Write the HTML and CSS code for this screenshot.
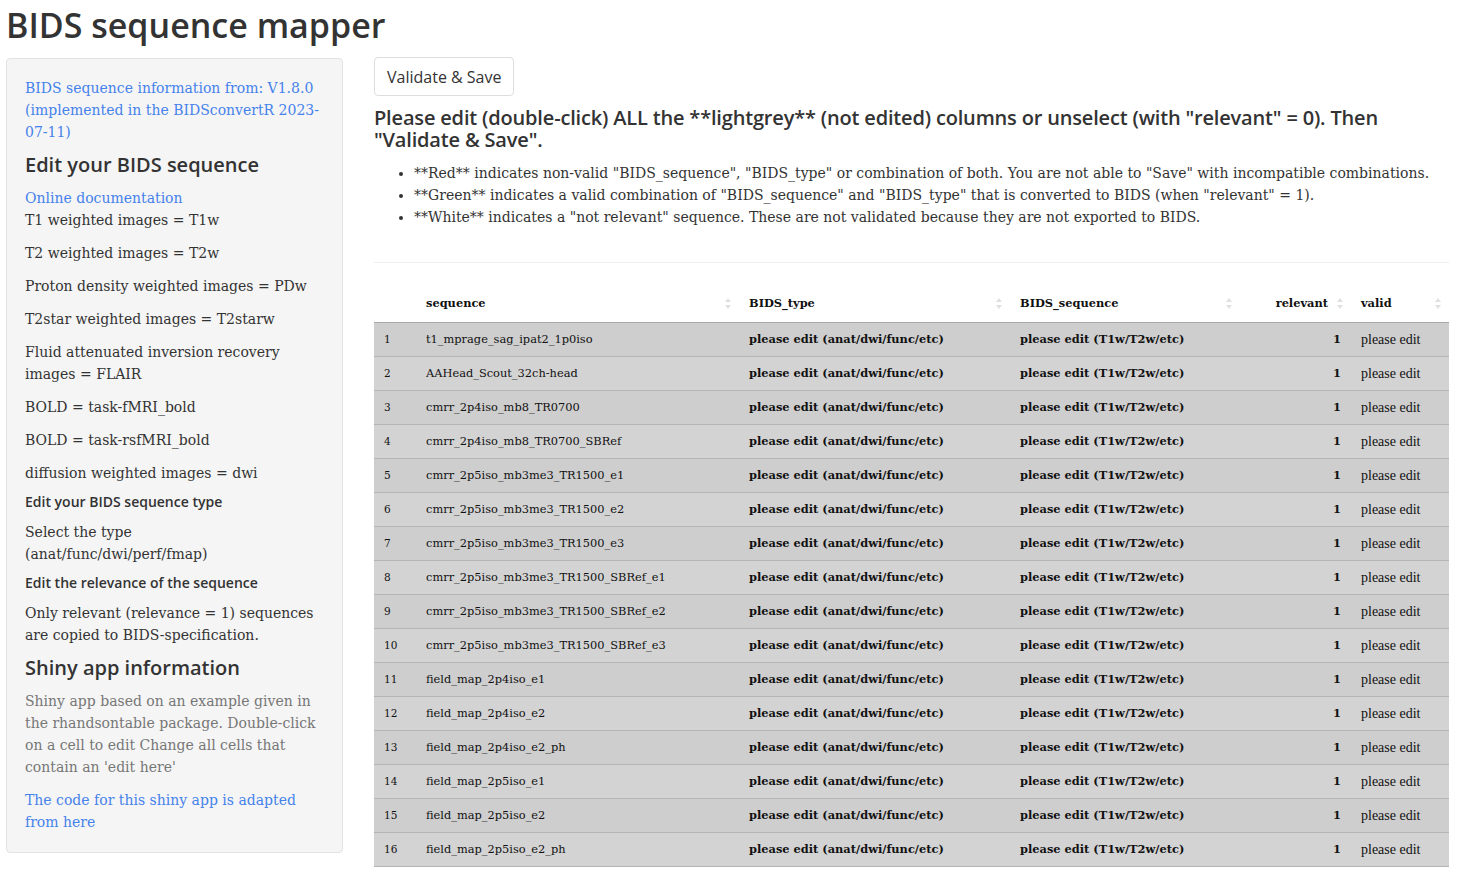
FILE: index.html
```html
<!DOCTYPE html>
<html lang="en">
<head>
<meta charset="utf-8">
<title>BIDS sequence mapper</title>
<link rel="stylesheet" href="styles.css">
</head>
<body>
<h1 class="title">BIDS sequence mapper</h1>
<div class="layout">
  <aside class="well">
    <p class="first"><a href="#">BIDS sequence information from: V1.8.0<br>(implemented in the BIDSconvertR 2023-<br>07-11)</a></p>
    <h4 class="side-h">Edit your BIDS sequence</h4>
    <a href="#">Online documentation</a>
    <p>T1 weighted images = T1w</p>
    <p>T2 weighted images = T2w</p>
    <p>Proton density weighted images = PDw</p>
    <p>T2star weighted images = T2starw</p>
    <p>Fluid attenuated inversion recovery<br>images = FLAIR</p>
    <p>BOLD = task-fMRI_bold</p>
    <p>BOLD = task-rsfMRI_bold</p>
    <p>diffusion weighted images = dwi</p>
    <h5 class="side-h5">Edit your BIDS sequence type</h5>
    <p>Select the type<br>(anat/func/dwi/perf/fmap)</p>
    <h5 class="side-h5">Edit the relevance of the sequence</h5>
    <p>Only relevant (relevance = 1) sequences<br>are copied to BIDS-specification.</p>
    <h4 class="side-h">Shiny app information</h4>
    <p class="muted">Shiny app based on an example given in<br>the rhandsontable package. Double-click<br>on a cell to edit Change all cells that<br>contain an 'edit here'</p>
    <p class="last"><a href="#">The code for this shiny app is adapted<br>from here</a></p>
  </aside>
  <main class="main">
    <button class="btn">Validate &amp; Save</button>
    <h4 class="instr">Please edit (double-click) ALL the **lightgrey** (not edited) columns or unselect (with "relevant" = 0). Then<br>"Validate &amp; Save".</h4>
    <ul class="legend">
      <li>**Red** indicates non-valid "BIDS_sequence", "BIDS_type" or combination of both. You are not able to "Save" with incompatible combinations.</li>
      <li>**Green** indicates a valid combination of "BIDS_sequence" and "BIDS_type" that is converted to BIDS (when "relevant" = 1).</li>
      <li>**White** indicates a "not relevant" sequence. These are not validated because they are not exported to BIDS.</li>
    </ul>
    <hr class="sep">
    <table class="grid">
      <colgroup>
        <col class="c-num"><col class="c-seq"><col class="c-type"><col class="c-bseq"><col class="c-rel"><col class="c-valid">
      </colgroup>
      <thead>
        <tr>
          <th></th>
          <th><div class="th"><span>sequence</span><span class="sort"></span></div></th>
          <th><div class="th"><span>BIDS_type</span><span class="sort"></span></div></th>
          <th><div class="th"><span>BIDS_sequence</span><span class="sort"></span></div></th>
          <th><div class="th th-right"><span>relevant</span><span class="sort"></span></div></th>
          <th><div class="th"><span>valid</span><span class="sort"></span></div></th>
        </tr>
      </thead>
      <tbody>
        <tr><td class="num">1</td><td>t1_mprage_sag_ipat2_1p0iso</td><td class="b">please edit (anat/dwi/func/etc)</td><td class="b">please edit (T1w/T2w/etc)</td><td class="b r">1</td><td class="v">please edit</td></tr>
        <tr><td class="num">2</td><td>AAHead_Scout_32ch-head</td><td class="b">please edit (anat/dwi/func/etc)</td><td class="b">please edit (T1w/T2w/etc)</td><td class="b r">1</td><td class="v">please edit</td></tr>
        <tr><td class="num">3</td><td>cmrr_2p4iso_mb8_TR0700</td><td class="b">please edit (anat/dwi/func/etc)</td><td class="b">please edit (T1w/T2w/etc)</td><td class="b r">1</td><td class="v">please edit</td></tr>
        <tr><td class="num">4</td><td>cmrr_2p4iso_mb8_TR0700_SBRef</td><td class="b">please edit (anat/dwi/func/etc)</td><td class="b">please edit (T1w/T2w/etc)</td><td class="b r">1</td><td class="v">please edit</td></tr>
        <tr><td class="num">5</td><td>cmrr_2p5iso_mb3me3_TR1500_e1</td><td class="b">please edit (anat/dwi/func/etc)</td><td class="b">please edit (T1w/T2w/etc)</td><td class="b r">1</td><td class="v">please edit</td></tr>
        <tr><td class="num">6</td><td>cmrr_2p5iso_mb3me3_TR1500_e2</td><td class="b">please edit (anat/dwi/func/etc)</td><td class="b">please edit (T1w/T2w/etc)</td><td class="b r">1</td><td class="v">please edit</td></tr>
        <tr><td class="num">7</td><td>cmrr_2p5iso_mb3me3_TR1500_e3</td><td class="b">please edit (anat/dwi/func/etc)</td><td class="b">please edit (T1w/T2w/etc)</td><td class="b r">1</td><td class="v">please edit</td></tr>
        <tr><td class="num">8</td><td>cmrr_2p5iso_mb3me3_TR1500_SBRef_e1</td><td class="b">please edit (anat/dwi/func/etc)</td><td class="b">please edit (T1w/T2w/etc)</td><td class="b r">1</td><td class="v">please edit</td></tr>
        <tr><td class="num">9</td><td>cmrr_2p5iso_mb3me3_TR1500_SBRef_e2</td><td class="b">please edit (anat/dwi/func/etc)</td><td class="b">please edit (T1w/T2w/etc)</td><td class="b r">1</td><td class="v">please edit</td></tr>
        <tr><td class="num">10</td><td>cmrr_2p5iso_mb3me3_TR1500_SBRef_e3</td><td class="b">please edit (anat/dwi/func/etc)</td><td class="b">please edit (T1w/T2w/etc)</td><td class="b r">1</td><td class="v">please edit</td></tr>
        <tr><td class="num">11</td><td>field_map_2p4iso_e1</td><td class="b">please edit (anat/dwi/func/etc)</td><td class="b">please edit (T1w/T2w/etc)</td><td class="b r">1</td><td class="v">please edit</td></tr>
        <tr><td class="num">12</td><td>field_map_2p4iso_e2</td><td class="b">please edit (anat/dwi/func/etc)</td><td class="b">please edit (T1w/T2w/etc)</td><td class="b r">1</td><td class="v">please edit</td></tr>
        <tr><td class="num">13</td><td>field_map_2p4iso_e2_ph</td><td class="b">please edit (anat/dwi/func/etc)</td><td class="b">please edit (T1w/T2w/etc)</td><td class="b r">1</td><td class="v">please edit</td></tr>
        <tr><td class="num">14</td><td>field_map_2p5iso_e1</td><td class="b">please edit (anat/dwi/func/etc)</td><td class="b">please edit (T1w/T2w/etc)</td><td class="b r">1</td><td class="v">please edit</td></tr>
        <tr><td class="num">15</td><td>field_map_2p5iso_e2</td><td class="b">please edit (anat/dwi/func/etc)</td><td class="b">please edit (T1w/T2w/etc)</td><td class="b r">1</td><td class="v">please edit</td></tr>
        <tr><td class="num">16</td><td>field_map_2p5iso_e2_ph</td><td class="b">please edit (anat/dwi/func/etc)</td><td class="b">please edit (T1w/T2w/etc)</td><td class="b r">1</td><td class="v">please edit</td></tr>
      </tbody>
    </table>
  </main>
</div>
</body>
</html>
```

FILE: styles.css
```css
html, body {
  margin: 0;
  padding: 0;
  background: #ffffff;
}
body {
  font-family: "DejaVu Serif", "Liberation Serif", serif;
  font-size: 14px;
  line-height: 22px;
  color: #333333;
  padding: 0 11px 0 6px;
}
a {
  color: #4582ec;
  text-decoration: none;
}
.title {
  font-family: "Open Sans", "Inter", sans-serif;
  font-weight: 600;
  font-size: 34px;
  line-height: 40px;
  margin: 5px 0 12px 0;
  color: #333333;
}
.layout {
  display: flex;
  align-items: flex-start;
  gap: 31px;
}
.well {
  flex: 0 0 337px;
  box-sizing: border-box;
  background: #f5f5f5;
  border: 1px solid #e3e3e3;
  border-radius: 4px;
  padding: 18px 18px 19px 18px;
  margin-top: 1px;
}
.well p {
  margin: 0 0 11px 0;
}
.well .last {
  margin-bottom: 0;
}
.side-h {
  font-family: "Open Sans", "Inter", sans-serif;
  font-weight: 600;
  font-size: 20px;
  line-height: 22px;
  margin: 11px 0 11px 0;
  color: #333333;
}
.side-h5 {
  font-family: "Open Sans", "Inter", sans-serif;
  font-weight: 600;
  font-size: 14px;
  line-height: 14px;
  margin: 11px 0 12px 0;
  color: #333333;
}
.muted {
  color: #777777;
}
.main {
  flex: 1 1 auto;
  min-width: 0;
}
.btn {
  font-family: "Open Sans", "Inter", sans-serif;
  font-size: 16px;
  font-weight: 400;
  color: #333333;
  background: #ffffff;
  border: 1px solid #dddddd;
  border-radius: 4px;
  height: 39px;
  padding: 0 12px;
  display: block;
}
.instr {
  font-family: "Open Sans", "Inter", sans-serif;
  font-weight: 600;
  font-size: 20px;
  line-height: 22px;
  letter-spacing: -0.17px;
  margin: 11px 0 11px 0;
  color: #333333;
}
.legend {
  margin: 0 0 11px 0;
  padding-left: 40px;
}
.sep {
  border: 0;
  border-top: 1px solid #eeeeee;
  margin: 34px 0 22px 0;
}
.grid {
  width: 100%;
  border-collapse: collapse;
  table-layout: fixed;
  font-size: 11.4px;
  line-height: 17px;
  color: #111111;
}
.c-num { width: 42px; }
.c-seq { width: 323px; }
.c-type { width: 271px; }
.c-bseq { width: 230px; }
.c-rel { width: 111px; }
.c-valid { width: auto; }
.grid th {
  text-align: left;
  font-weight: bold;
  padding: 10px 8px 10px 10px;
  border-bottom: 1px solid #a9a9a9;
}
.th {
  display: flex;
  align-items: center;
  justify-content: space-between;
}
.th-right {
  justify-content: flex-end;
  gap: 9px;
}
.sort {
  display: flex;
  flex-direction: column;
  gap: 3px;
}
.sort::before, .sort::after {
  content: "";
  display: block;
  width: 0;
  height: 0;
  border-left: 3px solid transparent;
  border-right: 3px solid transparent;
}
.sort::before {
  border-bottom: 4px solid #e0e0e0;
}
.sort::after {
  border-top: 4px solid #e0e0e0;
}
.grid td {
  padding: 8px 10px;
  border-top: 1px solid #b5b5b5;
  white-space: nowrap;
  overflow: hidden;
}
.grid tbody tr:nth-child(odd) td {
  background: #cecece;
}
.grid tbody tr:nth-child(even) td {
  background: #d3d3d3;
}
.grid tbody tr:last-child td {
  border-bottom: 1px solid #b5b5b5;
}
.grid thead + tbody tr:first-child td {
  border-top: 0;
}
.num {
  font-size: 10.5px;
}
.b {
  font-weight: bold;
}
.r {
  text-align: right;
}
.v {
  font-family: "Liberation Serif", serif;
  font-size: 14px;
}
```
